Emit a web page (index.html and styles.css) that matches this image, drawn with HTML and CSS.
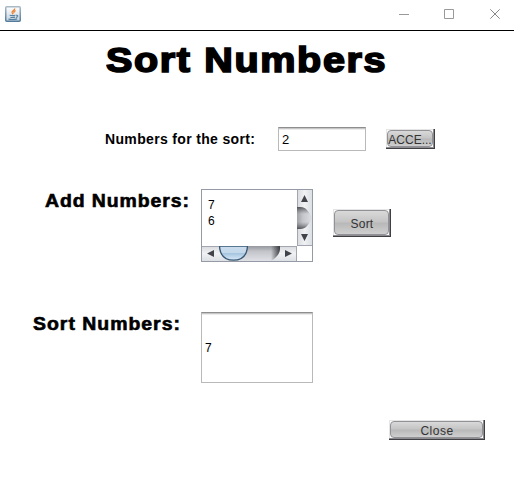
FILE: index.html
```html
<!DOCTYPE html>
<html lang="en">
<head>
<meta charset="utf-8">
<title>Sort Numbers</title>
<link rel="stylesheet" href="styles.css">
</head>
<body>
<header class="titlebar">
  <svg class="app-icon" width="16" height="16" viewBox="0 0 16 16">
    <defs><linearGradient id="tile" x1="0" y1="0" x2="0" y2="1"><stop offset="0" stop-color="#fff"/><stop offset="1" stop-color="#c4d3df"/></linearGradient>
    <linearGradient id="edge" x1="0" y1="0" x2="0" y2="1"><stop offset="0" stop-color="#a9bac6"/><stop offset="1" stop-color="#537b9c"/></linearGradient></defs>
    <rect x=".75" y=".75" width="14.5" height="14.5" rx="1" fill="url(#tile)" stroke="url(#edge)" stroke-width="1.5"/>
    <path d="M9.7 2.5C10 4.3 6.8 4.8 7.1 6.4Q7.3 7.3 8.1 8.2M10.6 4.6C8.6 5.3 8.6 6.2 9.2 7" fill="none" stroke="#ee8131" stroke-width="1.3"/>
    <path d="M4.7 9.3Q7.5 10 10.4 9.3M5.3 11.2Q7.5 11.8 10 11.1M3.5 13.1Q8 14.1 12.2 12.9M11 9.3Q13.2 9 12.7 10.3Q12.2 11.2 10.9 11.5" fill="none" stroke="#557f9f" stroke-width="1.1"/>
  </svg>
  <svg class="controls" width="103" height="12" viewBox="0 0 103 12" fill="none" stroke="#999">
    <path d="M0 6.5H10M45.5 1.5H54.5V10.5H45.5Z"/>
    <path d="M91.3 1.3L100.7 10.7M100.7 1.3L91.3 10.7" stroke="#888"/>
  </svg>
</header>
<main>
  <h1>Sort Numbers</h1>
  <div class="row count-row">
    <span class="count-label">Numbers for the sort:</span>
    <div class="field count-field">2</div>
    <button class="button accept"><span>ACCE...</span></button>
  </div>
  <div class="row add-row">
    <h2>Add Numbers:</h2>
    <div class="scroll-pane">
      <div class="list">7<br>6</div>
      <svg class="vbar" width="15" height="56" viewBox="0 0 15 56">
        <defs>
          <linearGradient id="track" x1="0" y1="0" x2="1" y2="0"><stop offset="0" stop-color="#a0a2a8"/><stop offset=".4" stop-color="#c5c6cc"/><stop offset="1" stop-color="#dcdee4"/></linearGradient>
          <linearGradient id="shade" x1="0" y1="0" x2="0" y2="1"><stop offset="0" stop-color="#303236" stop-opacity=".75"/><stop offset=".32" stop-color="#606268" stop-opacity="0"/><stop offset=".68" stop-color="#606268" stop-opacity="0"/><stop offset="1" stop-color="#303236" stop-opacity=".75"/></linearGradient>
          <linearGradient id="btnv" x1="0" y1="0" x2="1" y2="0"><stop offset="0" stop-color="#d7dadd"/><stop offset=".5" stop-color="#f0f1f3"/><stop offset="1" stop-color="#dce0e4"/></linearGradient>
        </defs>
        <rect width="15" height="56" fill="url(#btnv)"/>
        <path d="M0 17H3C9 17 11 21 15 27V29C11 35 9 39 3 39H0Z" fill="url(#track)"/>
        <path d="M0 17H3C9 17 11 21 15 27V29C11 35 9 39 3 39H0Z" fill="url(#shade)"/>
        <path d="M.5 0V17M.5 39V56M0 55.5H15" stroke="#a3a6b0"/>
        <path d="M4 12L7.5 5L11 12ZM4 44L7.5 51L11 44Z" fill="#40434a"/>
      </svg>
      <svg class="hbar" width="95" height="15" viewBox="0 0 95 15">
        <defs>
          <linearGradient id="btnh" x1="0" y1="0" x2="0" y2="1"><stop offset="0" stop-color="#d7dadd"/><stop offset=".5" stop-color="#f0f1f3"/><stop offset="1" stop-color="#dce0e4"/></linearGradient>
          <linearGradient id="trackh" x1="0" y1="0" x2="0" y2="1"><stop offset="0" stop-color="#95979e"/><stop offset=".35" stop-color="#c2c4ca"/><stop offset="1" stop-color="#dfe1e7"/></linearGradient>
          <linearGradient id="shadeh" x1="0" y1="0" x2="1" y2="0"><stop offset="0" stop-color="#303236" stop-opacity="0"/><stop offset="1" stop-color="#303236" stop-opacity=".9"/></linearGradient>
          <linearGradient id="thumb" x1="0" y1="0" x2="0" y2="1"><stop offset="0" stop-color="#cbdcec"/><stop offset=".48" stop-color="#c3d8eb"/><stop offset=".52" stop-color="#a5c4de"/><stop offset="1" stop-color="#d8eafa"/></linearGradient>
        </defs>
        <rect width="95" height="15" fill="url(#btnh)"/>
        <path d="M17 0H78V3C78 8 74 12 69 15H30C22 12 17 7 17 0Z" fill="url(#trackh)"/>
        <path d="M69 0H78V3C77.5 8 74 12 69 15Z" fill="url(#shadeh)"/>
        <path d="M17.5 0C18 9 23 14.2 31.5 14.2S45 9 45.5 0Z" fill="url(#thumb)" stroke="#365672" stroke-width="1.3"/>
        <path d="M0 .5H17M78 .5H95M94.5 0V15" stroke="#a3a6b0"/>
        <path d="M12 4L5 7.5L12 11ZM83 4L90 7.5L83 11Z" fill="#40434a"/>
      </svg>
    </div>
    <button class="button sort"><span>Sort</span></button>
  </div>
  <div class="row result-row">
    <h2>Sort Numbers:</h2>
    <div class="field result">7</div>
  </div>
  <div class="row close-row"><button class="button close"><span>Close</span></button></div>
</main>
</body>
</html>
```
FILE: styles.css
```css
* { box-sizing: border-box; }
body { margin: 0; background: #fff; color: #000; font: 12px/16px "Liberation Sans", Arial, sans-serif; }
svg { display: block; }
.titlebar { display: flex; justify-content: space-between; height: 31px; padding: 6px 12px 0 5px; border-bottom: 1px solid #000; }
.controls { margin-top: 2px; }
h1, h2 { margin: 0; font-weight: bold; white-space: nowrap; transform-origin: 0 50%; }
h1 { width: max-content; margin: 9px 0 0 106px; font-size: 35px; line-height: 40px; letter-spacing: 1.45px; -webkit-text-stroke: 1.7px #000; transform: scaleX(1.13); }
h2 { padding-top: 1px; font-size: 18px; line-height: 22px; letter-spacing: .85px; -webkit-text-stroke: .6px #000; transform: scaleX(1.08); }
.row { display: flex; align-items: flex-start; }
.count-row { margin-top: 47px; padding-left: 105px; }
.count-label { width: 173px; padding-top: 4px; font-size: 14px; font-weight: bold; letter-spacing: .34px; white-space: nowrap; }
.field { display: flex; align-items: center; padding-left: 3px; border: 1px solid #b9b9b9; border-top-color: #8e8e8e; box-shadow: inset 0 1px #c6c6c6, inset 0 2px #ececec; }
.count-field { width: 88px; height: 24px; padding-top: 2px; font-size: 13px; }
.button { display: block; padding: 1px 2px 2px 1px; border: 0; background: #fff; color: #333; font: 12px "Liberation Sans", Arial, sans-serif; box-shadow: inset -1px -1px #404044, inset -2px -2px #8c8c90, inset 1px 1px #e5e5e5; }
.button span { display: flex; align-items: center; justify-content: center; width: 100%; height: 100%; padding-top: 2px; border: 1px solid #929296; border-radius: 4px; background: linear-gradient(#d9d9d9, #c4c4c4 48%, #b8b8b8 52%, #cfcfcf); white-space: nowrap; }
.accept { width: 49px; height: 20px; margin: 2px 0 0 20px; }
.add-row { margin-top: 38px; padding-left: 45px; }
.add-row h2 { width: 156px; }
.scroll-pane { display: grid; grid-template: 56px 15px / 95px 15px; width: 112px; height: 73px; border: 1px solid #9699a6; }
.list { padding: 7px 6px; }
.sort { width: 58px; height: 28px; margin: 20px 0 0 20px; }
.sort span { padding-left: 1px; letter-spacing: .2px; }
.result-row { margin-top: 50px; padding-left: 33px; }
.result-row h2 { width: 168px; letter-spacing: .92px; }
.result { width: 112px; height: 71px; padding-top: 1px; }
.close-row { margin-top: 37px; padding-left: 389px; }
.close { width: 96px; height: 20px; }
.close span { padding-left: 1px; letter-spacing: .5px; }
```
